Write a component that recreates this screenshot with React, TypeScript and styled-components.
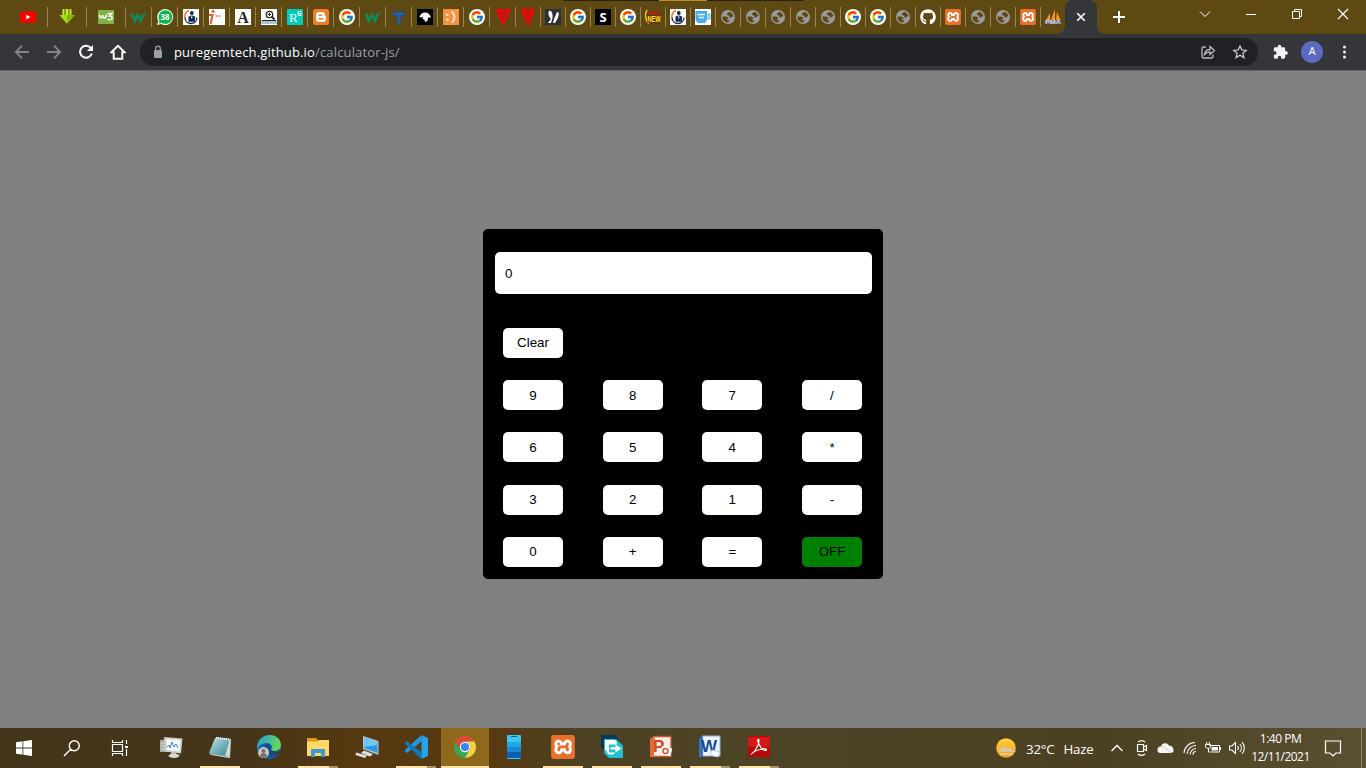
import React from "react";
import styled, { createGlobalStyle } from "styled-components";
import { FcGoogle } from "react-icons/fc";
import { FaGithub } from "react-icons/fa";
import { SiXampp } from "react-icons/si";

const Global = createGlobalStyle`
  * { box-sizing: border-box; }
  body { margin: 0; background: #808080; overflow: hidden; }
`;

const ui = `"Open Sans", "Noto Sans", sans-serif`;

const Screen = styled.div`
  width: 1366px;
  height: 768px;
  display: flex;
  flex-direction: column;
  font-family: ${ui};
`;

/* ---------- browser chrome ---------- */

const TabStrip = styled.header`
  position: relative;
  height: 34px;
  display: flex;
  background: #5f4913;
  padding-left: 9px;
`;

const TopEdge = styled.div`
  position: absolute;
  top: 0;
  left: 563px;
  width: 241px;
  height: 1px;
  background: linear-gradient(90deg, #2b2414 0 96px, #c08f2c 96px 144px, #2b2414 144px);
`;

const Tab = styled.div<{ $w: number; $pad: number; $last?: boolean }>`
  width: ${(p) => p.$w}px;
  height: 20px;
  margin-top: 7px;
  padding: 2px 0 0 ${(p) => p.$pad}px;
  border-right: 1px solid ${(p) => (p.$last ? "transparent" : "#9c8450")};
  svg { display: block; }
`;

const ActiveTab = styled.div`
  position: relative;
  width: 32px;
  height: 34px;
  margin-left: -1px;
  background: #35363a;
  border-radius: 8px 8px 0 0;
  display: flex;
  align-items: center;
  justify-content: center;
  &::before, &::after {
    content: "";
    position: absolute;
    bottom: 0;
    width: 8px;
    height: 8px;
  }
  &::before { left: -8px; background: radial-gradient(circle at 0 0, transparent 7.5px, #35363a 8px); }
  &::after { right: -8px; background: radial-gradient(circle at 100% 0, transparent 7.5px, #35363a 8px); }
`;

const NewTab = styled.div`
  margin: 10px 0 0 15px;
  height: 14px;
  svg { display: block; }
`;

const WindowButtons = styled.div`
  margin-left: auto;
  height: 28px;
  display: flex;
`;

const WindowButton = styled.div`
  width: 46px;
  display: flex;
  align-items: center;
  justify-content: center;
`;

const Toolbar = styled.div`
  height: 37px;
  display: flex;
  align-items: center;
  padding: 0 12px 1px 14px;
  background: #35363a;
  border-bottom: 1px solid #66656a;
  svg { display: block; flex: none; }
`;

const NavButtons = styled.div`
  display: flex;
  gap: 16px;
  margin-right: 14px;
`;

const AddressBar = styled.div`
  width: 1118px;
  height: 28px;
  border-radius: 14px;
  background: #202124;
  display: flex;
  align-items: center;
  padding: 0 10px;
`;

const Url = styled.div`
  margin: 0 auto 0 8px;
  font-size: 13px;
  line-height: 18px;
  letter-spacing: 0.15px;
  color: #9aa0a6;
  b { font-weight: 400; color: #ffffff; }
`;

const AddressActions = styled.div`
  display: flex;
  gap: 16px;
`;

const ToolbarActions = styled.div`
  display: flex;
  align-items: center;
  margin-left: 14px;
`;

const Avatar = styled.div`
  width: 22px;
  height: 22px;
  margin: 0 15px 0 12px;
  border-radius: 50%;
  background: #5c6bc0;
  color: #fff;
  font: 11px/22px Roboto, sans-serif;
  text-align: center;
`;

/* ---------- calculator ---------- */

const Page = styled.main`
  flex: 1;
  display: flex;
  justify-content: center;
  align-items: flex-start;
  padding-top: 158px;
  background: #808080;
`;

const Calculator = styled.section`
  width: 400px;
  height: 350px;
  border-radius: 5px;
  background: #000;
  padding: 23px 11px 0 12px;
`;

const Display = styled.input`
  display: block;
  width: 377px;
  height: 42px;
  border: 0;
  border-radius: 5px;
  padding: 0 10px 0;
  background: #fff;
  color: #000;
  font: 13.333px "Liberation Sans", Arial, sans-serif;
`;

const Keys = styled.div`
  display: grid;
  grid-template-columns: repeat(4, 60px);
  grid-auto-rows: 30px;
  column-gap: 39.67px;
  row-gap: 22.2px;
  margin: 34px 0 0 8px;
`;

const Key = styled.button<{ $power?: boolean; $alone?: boolean }>`
  width: 60px;
  height: 30px;
  padding: 0 0 0.15px;
  border: 0;
  border-radius: 5px;
  background: ${(p) => (p.$power ? "green" : "#fff")};
  color: #000;
  font: 13.333px "Liberation Sans", Arial, sans-serif;
  grid-column-end: ${(p) => (p.$alone ? "-1" : "auto")};
  grid-column-start: ${(p) => (p.$alone ? "1" : "auto")};
`;

/* ---------- taskbar ---------- */

const Taskbar = styled.footer`
  height: 40px;
  display: flex;
  background: linear-gradient(90deg, #43351a 0, #45351a 240px, #54380f 350px, #573a12 500px, #4d4223 580px, #4d4326 800px, #4b4022 1100px, #5a5031 1366px);
  color: #fff;
`;

const SystemCell = styled.div`
  width: 48px;
  display: flex;
  align-items: center;
  justify-content: center;
`;

const Apps = styled.div`
  display: flex;
  gap: 1px;
  margin-left: 3px;
`;

type Run = "none" | "single" | "many" | "active";

const AppCell = styled.div<{ $run: Run }>`
  width: 48px;
  height: 40px;
  display: flex;
  flex-direction: column;
  align-items: center;
  background: ${(p) => (p.$run === "active" ? "#8f681c" : "transparent")};
  svg { display: block; margin: 7px 0; }
  svg svg { margin: 0; }
  &::after {
    content: "";
    width: ${(p) => (p.$run === "active" ? 48 : 40)}px;
    height: 2px;
    background: ${(p) =>
      p.$run === "none"
        ? "transparent"
        : p.$run === "many"
        ? "linear-gradient(90deg, #ffe2a6 0 31px, #a8946c 31px)"
        : "#ffe2a6"};
  }
`;

const Tray = styled.div`
  margin-left: auto;
  display: flex;
  align-items: center;
  font-size: 13.5px;
  svg { display: block; flex: none; }
`;

const Weather = styled.div`
  display: flex;
  align-items: center;
  white-space: nowrap;
  width: 115px;
  span { margin-left: 9px; font-size: 13.3px; letter-spacing: -0.2px; position: relative; top: 1px; }
`;

const TrayIcons = styled.div`
  display: flex;
  align-items: center;
  gap: 8px;
`;

const Clock = styled.div`
  width: 71px;
  text-align: center;
  font-size: 12px;
  line-height: 18px;
  letter-spacing: -0.5px;
  white-space: nowrap;
`;

const Notice = styled.div`
  margin: 0 19px 0 8px;
`;

const DesktopEdge = styled.div`
  width: 5px;
  height: 40px;
  border-left: 1px solid #8f886f;
`;

/* ---------- favicons ---------- */

const I = ({ children, s = 16 }: { children: React.ReactNode; s?: number }) => (
  <svg width={s} height={s} viewBox={`0 0 ${s} ${s}`} overflow="visible">{children}</svg>
);

const Youtube = () => (
  <I><rect x="0" y="2.5" width="16" height="11.2" rx="2.8" fill="#f00" /><path d="M6.3 5.7v4.7l4.2-2.3z" fill="#fff" /></I>
);
const Download = () => (
  <I>
    <path d="M3.500 0h2v7h-2zM6.500 0h3v7h-3zM10.500 0h2v7h-2z" fill="#c4ef2b" />
    <path d="M.3 6h15.4L8 14.8z" fill="#a6dc18" /><path d="M8 6h7.7L8 14.8z" fill="#7fb90d" />
  </I>
);
const W3 = () => (
  <I>
    <rect y="1" width="16" height="14" fill="#7cb342" />
    <path d="M1.500 5.500c0 4.500 3 4 3.200.5.2 4.500 3.800 3.500 3.800-.8M9.500 4.500h4.500l-2.500 2.500c3.500-.2 3.500 3.900 0 3.800-1 0-1.700-.4-2-1" fill="none" stroke="#fff" strokeWidth="1.500" />
  </I>
);
const WMark = () => (
  <I>
    <path d="M1 4.500l2.800 7.200L6.800 6l3 5.700 2.700-6.500" fill="none" stroke="#108a5c" strokeWidth="2.700" />
    <path d="M13 3h2l-1 1.400c1.500 0 1.200 2-.9 1.600" fill="none" stroke="#138a58" strokeWidth=".8" />
  </I>
);
const Whatsapp = () => (
  <I>
    <path d="M0 16l1.200-4A8 8 0 1 1 4 14.900z" fill="#e8fff0" />
    <path d="M1.700 14.400l.8-3A6.800 6.800 0 1 1 4.600 13.700z" fill="#12b34b" />
    <text x="8" y="10.800" fontSize="8" fontWeight="700" fill="#fff" textAnchor="middle" fontFamily="Open Sans">38</text>
  </I>
);
const Crest = () => (
  <I>
    <rect width="16" height="16" fill="#fff" />
    <path d="M6 1.500A6.300 6.300 0 0 0 2 9" fill="none" stroke="#e87843" strokeWidth="1.600" />
    <path d="M2 8.500c0 8 12 8 12 0" fill="none" stroke="#172b50" strokeWidth="1.300" />
    <circle cx="8.800" cy="4" r="1.900" fill="#172b50" />
    <path d="M5.500 7.500l3.300-1.300 3.300 1.300v5.300H5.500z" fill="#172b50" /><path d="M8.500 6.500L8.200 9l.6.8.6-.8-.3-2.500z" fill="#fff" />
  </I>
);
const Info = () => (
  <I>
    <rect width="16" height="16" fill="#fff" />
    <circle cx="4" cy="2.200" r="1.500" fill="#e5602c" /><path d="M0 6h3.500L1.500 15" fill="none" stroke="#e5602c" strokeWidth="2.200" />
    <path d="M6.500 7h2M9.500 7h2" stroke="#d77963" strokeWidth="1.400" />
  </I>
);
const LetterA = () => (
  <I>
    <rect width="16" height="16" fill="#fff" />
    <text x="8" y="13.500" fontSize="16" fontWeight="700" textAnchor="middle" fontFamily="Liberation Serif" fill="#262626">A</text>
  </I>
);
const SearchShot = () => (
  <I>
    <rect width="16" height="16" fill="#fff" /><path d="M0 12h16v3H0z" fill="#a3c7d9" /><path d="M1 11.500h14" stroke="#222" />
    <circle cx="8.500" cy="5.500" r="3.200" fill="#fff" stroke="#222" strokeWidth="1.300" /><path d="M10.500 7.500l3 3" stroke="#222" strokeWidth="1.800" />
    <path d="M7 5.500h3M8.500 4v3" stroke="#222" />
  </I>
);
const RG = () => (
  <I>
    <rect width="16" height="16" rx="1" fill="#00ccbb" />
    <text x="2" y="13" fontSize="13" fill="#fff" fontFamily="Liberation Serif">R</text>
    <text x="10" y="6.500" fontSize="6.500" fontWeight="700" fill="#fff" fontFamily="Open Sans">G</text>
  </I>
);
const Blogger = () => (
  <I>
    <rect width="16" height="16" rx="2.500" fill="#f57d1f" />
    <path d="M6.200 3H9c2 0 3 1.300 3 3.200 0 .8 1 .5 1 1.500v2A3.300 3.300 0 0 1 9.700 13H6.200A3.200 3.200 0 0 1 3 9.800V6.200A3.200 3.200 0 0 1 6.200 3z" fill="#fff" />
    <path d="M6.200 6.200h2.300M6.200 9.800h3.600" stroke="#f57d1f" strokeWidth="1.400" strokeLinecap="round" />
  </I>
);
const LetterT = () => (
  <I>
    <path d="M1 2.500h12l2 2-1 2h-3.600V15H6V6.500H2z" fill="#184a7e" opacity=".75" />
    <path d="M2 3.500h11v2.500H9.500v8.500h-3V6H2z" fill="#1d63b6" />
  </I>
);
const Bird = () => (
  <I><rect width="16" height="16" fill="#000" /><path d="M2.500 8.500c.5-3.500 3-5 5.500-5 3.500 0 5 2 6 5h-3l-.5 3.500L8 13l-.5-2.500-2-.5.500-2z" fill="#fff" /></I>
);
const Smile = () => (
  <I>
    <rect width="16" height="16" fill="#f59340" />
    <path d="M3 4.500h2.500V7H3zM3 9.500h2.500V12H3z" fill="#ffe1bd" /><path d="M8.500 2.500c4 3 4 8 0 11" fill="none" stroke="#ffe1bd" strokeWidth="2" />
  </I>
);
const GoogleDisc = () => (
  <I><circle cx="8" cy="8" r="8" fill="#fff" /><FcGoogle x={1} y={1} size={14} /></I>
);
const RedTriangle = () => (
  <I><path d="M0 0h16L8.800 16H7.200z" fill="#e80b0b" /><path d="M5.500 4h5L8 10.500z" fill="none" stroke="#9c1a0d" strokeWidth="1" /></I>
);
const Scribble = () => (
  <I>
    <rect width="16" height="16" fill="#2c3038" />
    <path d="M4 2c3-1 4 4 3.500 7L6 14H3l3-4c-2-2-3.500-6-2-8zM9 10l3-7 2 1-1 5-3 5H8z" fill="#fff" />
  </I>
);
const LetterS = () => (
  <I><rect width="16" height="16" fill="#000" /><text x="8" y="12.700" fontSize="13" fontWeight="700" textAnchor="middle" fontFamily="Open Sans" fill="#fff">S</text></I>
);
const New = () => (
  <I>
    <path d="M3 1l2 2 3-1 2 1 4-1v3H4z" fill="#b41b15" />
    <path d="M2 1C-.5 5 0 11 4 14.500" fill="none" stroke="#e4cd1a" strokeWidth="1.500" />
    <text x="2.500" y="13" fontSize="8.500" fontWeight="700" fill="#ffef1a" stroke="#7d1b12" strokeWidth="1.600" paintOrder="stroke" fontFamily="Liberation Sans" textLength="13" lengthAdjust="spacingAndGlyphs">NEW</text>
  </I>
);
const Cup = () => (
  <I>
    <rect width="16" height="16" fill="#fff" />
    <path d="M.500 2h11.500v9l-2 3h-7l-2.500-3z" fill="#43aee8" /><path d="M2.500 5.500h7.500M4 8.500h5" stroke="#fff" strokeWidth="1.300" />
    <path d="M13 5h2v5h-2z" fill="none" stroke="#43aee8" />
  </I>
);
const Globe = () => (
  <I>
    <circle cx="8" cy="8" r="7" fill="#9a9b9f" />
    <path d="M2.500 7.500h4l1.800 1.400v1.300H7v1h2.200v1.200l-1.700 1.200C4.500 13.300 2.200 11 2.500 7.500zM7 5.800V4.500l2.400-1.800c2.200.6 3.800 2.400 4 4.800h-1.500l-.8.900H9.300V6.900z" fill="#5f4913" />
  </I>
);
const Github = () => <FaGithub size={16} color="#fff" />;
const XamppGlyph = ({ s = 16 }: { s?: number }) => (
  <I s={s}>
    <rect x="1" y="1" width={s - 2} height={s - 2} fill="#fff" />
    <SiXampp size={s} color="#e8702a" />
  </I>
);
const Sails = () => (
  <I>
    <path d="M1 11L5 4v7zM6 11l4-11v11zM11 11l1-8 3.500 8z" fill="#f39a25" />
    <path d="M0 11h16l-1.500 4h-13z" fill="#5d6687" />
    <text x="0" y="15" fontSize="5.500" fontWeight="700" fill="#d6d9e5" fontFamily="Liberation Sans" textLength="16" lengthAdjust="spacingAndGlyphs">PMA</text>
  </I>
);

const TABS: React.FC[] = [
  Youtube, Download, W3, WMark, Whatsapp, Crest, Info, LetterA, SearchShot, RG, Blogger, GoogleDisc, WMark,
  LetterT, Bird, Smile, GoogleDisc, RedTriangle, RedTriangle, Scribble, GoogleDisc, LetterS, GoogleDisc, New,
  Crest, Cup, Globe, Globe, Globe, Globe, Globe, GoogleDisc, GoogleDisc, Globe, Github, XamppGlyph, Globe,
  Globe, XamppGlyph, Sails,
];

const tabWidth = (i: number) => (i < 3 ? 39 : i < 18 ? 26 : 25);
const tabPad = (i: number) => (i < 3 ? 11 : i < 18 ? 5 : 4);

/* ---------- taskbar icons ---------- */

const Monitor = () => (
  <I s={24}>
    <path d="M1 5l9-1v13H1z" fill="#aaa9a5" /><path d="M2 8h5M2 11h5M2 14h5" stroke="#e2e1dd" />
    <path d="M5 2l18.500 1.500L22 18.500 6 16.500z" fill="#cfcfca" /><path d="M7.500 4l14 1-1 11.500-12.500-1.500z" fill="#f5fbff" />
    <path d="M8 12l2-2 1 3 2-6 2 5 2-3 2 4" fill="none" stroke="#3a8ac9" /><path d="M12 17h5v3h-5z" fill="#bdbdb8" /><ellipse cx="15" cy="20.800" rx="5.500" ry="2.200" fill="#d8d8d2" />
  </I>
);
const Notepad = () => (
  <I s={24}>
    <defs><linearGradient id="note" x1="0" y1="0" x2="1" y2="1"><stop stopColor="#c5e3e6" /><stop offset="1" stopColor="#2b8798" /></linearGradient></defs>
    <path d="M8 2l15 2-1 19-8-2z" fill="#d9dad2" /><path d="M7 3l15 1-5 17-16-3z" fill="url(#note)" />
    <path d="M1 18l16 3 5-1-1 3-18-3z" fill="#b9c2bb" /><path d="M8 3l14 1.500" stroke="#ededed" strokeWidth="2" strokeDasharray="1 1" />
  </I>
);
const Edge = () => (
  <I s={24}>
    <defs><linearGradient id="edge" x1="0" y1="0" x2="1" y2=".3"><stop stopColor="#2499db" /><stop offset="1" stopColor="#67d65d" /></linearGradient></defs>
    <circle cx="12" cy="12" r="12" fill="#1261ad" />
    <path d="M0 12C1-3 23-4 24 10c0 6-7 7-10 5 3-3 0-7-4-7-5 0-9 3-10 7z" fill="url(#edge)" />
    <path d="M10 8.500c-5 3-3 13.500 5 13.500 3 0 6-2 7-4-6 1-9 0-8.500-3.500C14.500 11 13 9 10 8.500z" fill="#104c92" />
    <path d="M24 14.500c-2 2.500-7 3-10 .8 0 3 4 4 8.500 2.700z" fill="#46392a" />
    <circle cx="6.500" cy="17.500" r="5.500" fill="#c8c6c2" /><circle cx="6.500" cy="16" r="2" fill="#77716b" /><path d="M3 21c.5-4 6.500-4 7 0-2 2.500-5 2.500-7 0z" fill="#77716b" />
  </I>
);
const Explorer = () => (
  <I s={24}>
    <path d="M1 3h9l2 2h11v16H1z" fill="#df9819" /><path d="M1 6.500h11l1.500-1.500H23v16H1z" fill="#ffd968" />
    <path d="M5 22v-8h14v8h-4v-4H9v4z" fill="#4199d1" />
  </I>
);
const Remote = () => (
  <I s={24}>
    <path d="M8 1l15.500 5v14L8 14z" fill="#b5c7d4" /><path d="M9 2.500l13.500 4.500v11L9 13z" fill="#2b9ae3" /><path d="M9 2.500l13.500 4.500v3L9 12z" fill="#71c4f4" />
    <path d="M9 15.500l9 3.500-3 2.500-9-3.500zM1 17.500l11 3-2 2.500-9.500-3z" fill="#dce0df" />
  </I>
);
const VSCode = () => (
  <I s={24}>
    <path d="M17.500 0L24 3v18l-6.500 3z" fill="#24a4ee" />
    <path d="M17.500 0v6.500L3 18l-2.500-2.200L3 13z" fill="#2497dd" /><path d="M17.500 24v-6.500L3 6 .5 8.200l14 13z" fill="#087bc0" />
  </I>
);
const Chrome = () => (
  <I s={24}>
    <circle cx="12" cy="12" r="11" fill="#35a853" />
    <path d="M2.500 6.500A11 11 0 0 1 21.500 6.500H12a5.500 5.500 0 0 0-4.700 8.250z" fill="#e44435" />
    <path d="M21.500 6.500A11 11 0 0 1 12 23l4.700-8.250A5.500 5.500 0 0 0 12 6.500z" fill="#fbd13c" />
    <circle cx="12" cy="12" r="5.200" fill="#fff" /><circle cx="12" cy="12" r="4.100" fill="#3e82ef" />
  </I>
);
const Phone = () => (
  <I s={24}>
    <rect x="5" width="14" height="24" rx="1" fill="#38c9f3" /><path d="M5 7h14v5H5z" fill="#20a8e5" /><path d="M5 12h14v5H5z" fill="#188bd0" /><path d="M5 17h14v6H5z" fill="#0860b4" />
    <path d="M9 1.500h6" stroke="#14546c" />
  </I>
);
const Share = () => (
  <I s={24}>
    <path d="M1 0h14l4 5v12H6l-5-5z" fill="#0b3555" />
    <path d="M4 4h12.500L23 11v12H9l-5-5z" fill="#22bfd4" />
    <path d="M5 5h10l2 2.500v2H8v8l-3-3z" fill="#fff" />
    <path d="M7 9.500h2v8h6l-1.500 2H9l-2-2z" fill="#fff" />
    <path d="M10.500 12.300h5V9.500l6 4-6 4v-2.900h-5z" fill="#fff" />
  </I>
);
const PowerPoint = () => (
  <I s={24}>
    <path d="M5 1.500h17v20H4z" fill="#f9ede6" stroke="#cb5529" strokeWidth="1.300" /><path d="M1 4l4-3v21H1z" fill="#e6693a" />
    <text x="4" y="16.500" fontSize="17" fontWeight="700" fill="#cf4c1d" fontFamily="Liberation Sans">P</text>
    <rect x="12" y="12" width="10.500" height="8" fill="#fff" transform="rotate(15 17 16)" /><circle cx="16.500" cy="16" r="2.500" fill="none" stroke="#d7542b" strokeWidth="1.500" />
  </I>
);
const Word = () => (
  <I s={24}>
    <path d="M4 1h18v20H4z" fill="#eff5fd" stroke="#8fb1dc" /><path d="M1 4l4-3v21H1z" fill="#3976c2" />
    <text x="3" y="16.500" fontSize="17" fontWeight="700" fill="#174a94" fontFamily="Liberation Sans">W</text>
    <path d="M14 15l8 2-2 5-8-2z" fill="#fff" stroke="#b8cbe6" />
  </I>
);
const Acrobat = () => (
  <I s={24}>
    <rect x="1" y="1" width="22" height="21" rx="1.500" fill="#b80808" /><path d="M1 2h22v10H1z" fill="#d31815" />
    <path d="M5 18.500c3-1.500 7-9 7-13 0-2-2-1-1 1 1 4 4 9 8 9 2-1-1-3-6-1-4 1-7 2.500-8 4z" fill="none" stroke="#fff" strokeWidth="1.200" />
  </I>
);
const Xampp24 = () => <XamppGlyph s={24} />;

const APPS: [React.FC, Run][] = [
  [Monitor, "none"], [Notepad, "single"], [Edge, "none"], [Explorer, "many"], [Remote, "none"],
  [VSCode, "many"], [Chrome, "active"], [Phone, "none"], [Xampp24, "single"], [Share, "single"],
  [PowerPoint, "single"], [Word, "many"], [Acrobat, "many"],
];

const KEYS = ["Clear", "9", "8", "7", "/", "6", "5", "4", "*", "3", "2", "1", "-", "0", "+", "=", "OFF"];

const Line = ({ d, w = 16, h = 16, c = "#fff", sw = 1 }: { d: string; w?: number; h?: number; c?: string; sw?: number }) => (
  <svg width={w} height={h} viewBox={`0 0 ${w} ${h}`} fill="none" stroke={c} strokeWidth={sw}><path d={d} /></svg>
);

export default function App() {
  return (
    <Screen>
      <Global />
      <TabStrip>
        <TopEdge />
        {TABS.map((Icon, i) => (
          <Tab key={i} $w={tabWidth(i)} $pad={tabPad(i)} $last={i === TABS.length - 1}><Icon /></Tab>
        ))}
        <ActiveTab><Line w={10} h={10} sw={1.6} d="M1.200 1.200l7.600 7.600M8.800 1.200L1.200 8.800" /></ActiveTab>
        <NewTab><Line w={14} h={14} sw={2} d="M7 1v12M1 7h12" /></NewTab>
        <WindowButtons>
          <WindowButton><Line w={12} h={12} d="M1 3.500l5 5 5-5" /></WindowButton>
          <WindowButton><Line w={10} h={10} d="M0 5.500h10" /></WindowButton>
          <WindowButton><Line w={10} h={10} d="M.5 2.500h7v7h-7zM2.500 2.500v-2h7v7h-2" /></WindowButton>
          <WindowButton><Line w={12} h={12} sw={1.2} d="M1 1l10 10M11 1L1 11" /></WindowButton>
        </WindowButtons>
      </TabStrip>

      <Toolbar>
        <NavButtons>
          <Line c="#85868a" sw={1.8} d="M15 8H2M8 1.700L1.800 8 8 14.300" />
          <Line c="#85868a" sw={1.8} d="M1 8h13M8 1.700L14.200 8 8 14.300" />
          <svg width="16" height="16" viewBox="0 0 16 16"><path d="M12.800 4A6 6 0 1 0 13.800 9.500" fill="none" stroke="#fff" strokeWidth="2" /><path d="M15 1v6H9z" fill="#fff" /></svg>
          <Line sw={1.900} d="M8 1.800L1.300 8.300H3.700v6.400h8.600V8.300h2.400z" />
        </NavButtons>
        <AddressBar>
          <svg width="16" height="16" viewBox="0 0 16 16"><rect x="4" y="6" width="8" height="8" rx="1" fill="#9aa0a6" /><path d="M5.700 6V4.500a2.300 2.300 0 0 1 4.600 0V6" fill="none" stroke="#9aa0a6" strokeWidth="1.300" /></svg>
          <Url><b>puregemtech.github.io</b>/calculator-js/</Url>
          <AddressActions>
            <Line c="#b9bbbf" sw={1.300} d="M6 3H3.500A1.500 1.500 0 0 0 2 4.500v8A1.500 1.500 0 0 0 3.500 14h8a1.500 1.500 0 0 0 1.500-1.500V10.500M4.500 10.500C5 7 7 5.500 10 5.500V2.500l4.500 4-4.500 4V8C7.500 8 6 8.700 4.500 10.500z" />
            <Line c="#c8cace" sw={1.300} d="M8 2l1.800 4 4.400.4-3.300 2.900 1 4.300L8 11.300l-3.900 2.300 1-4.300L1.800 6.400 6.200 6z" />
          </AddressActions>
        </AddressBar>
        <ToolbarActions>
          <svg width="17" height="16" viewBox="0 0 24 24"><path fill="#f1f3f4" d="M20.500 11H19V7a2 2 0 0 0-2-2h-4V3.500a2.500 2.500 0 0 0-5 0V5H4a2 2 0 0 0-2 2v3.800h1.500a2.700 2.700 0 0 1 0 5.400H2V20a2 2 0 0 0 2 2h3.800v-1.500a2.700 2.700 0 0 1 5.400 0V22H17a2 2 0 0 0 2-2v-4h1.500a2.500 2.500 0 0 0 0-5z" /></svg>
          <Avatar>A</Avatar>
          <svg width="16" height="16" viewBox="0 0 16 16" fill="#f1f3f4"><circle cx="6.500" cy="3" r="1.500" /><circle cx="6.500" cy="8" r="1.500" /><circle cx="6.500" cy="13" r="1.500" /></svg>
        </ToolbarActions>
      </Toolbar>

      <Page>
        <Calculator>
          <Display readOnly value="0" />
          <Keys>
            {KEYS.map((k) => <Key key={k} $alone={k === "Clear"} $power={k === "OFF"}>{k}</Key>)}
          </Keys>
        </Calculator>
      </Page>

      <Taskbar>
        <SystemCell>
          <svg width="16" height="16" viewBox="0 0 16 16" fill="#fff"><path d="M0 2.200L6.500 1.300v6.200H0zM7.300 1.200L16 0v7.500H7.300zM0 8.400h6.500v6.200L0 13.700zM7.300 8.400H16V16l-8.700-1.200z" /></svg>
        </SystemCell>
        <SystemCell><Line w={18} h={18} sw={1.400} d="M16.300 6.700a5 5 0 1 1-10 0 5 5 0 1 1 10 0zM7.700 10.300L1 17" /></SystemCell>
        <SystemCell><Line w={18} h={18} sw={1.200} d="M1.500 1v2.500h10V1M1.500 17v-2.500h10V17M1.500 5.500h10v7h-10zM15.500 1v4M15.500 10v7M14 7.500h3M14 8.500h3" /></SystemCell>
        <Apps>
          {APPS.map(([Icon, run], i) => <AppCell key={i} $run={run}><Icon /></AppCell>)}
        </Apps>
        <Tray>
          <Weather>
            <svg width="22" height="22" viewBox="0 0 22 22">
              <defs><linearGradient id="sun" x1="0" y1="0" x2="0" y2="1"><stop stopColor="#ffd23e" /><stop offset="1" stopColor="#f39a20" /></linearGradient></defs>
              <circle cx="11" cy="11" r="9.800" fill="url(#sun)" />
              <path d="M3 13c3-1 3-3 6-3 3-.5 3 2 7 2 2 0 4 2 5 3H9c-3 0-4-1-6-2z" fill="#d9c6a8" /><path d="M5 17h13" stroke="#e8c58d" strokeWidth="2" />
            </svg>
            <span>32°C</span><span>Haze</span>
          </Weather>
          <TrayIcons>
            <Line w={17} h={14} sw={1.300} d="M1.500 10L7 4.500l5.500 5.500" />
            <Line w={14} h={18} sw={1.200} d="M2.500 5.500h6v7h-6zM8.500 8l3-1.500v5L8.500 10M3 3c2-1.700 5-1.700 7 0M3 15c2 1.700 5 1.700 7 0" />
            <svg width="18" height="12" viewBox="0 0 18 12"><path d="M3.500 11a3.200 3.200 0 0 1 .3-6.400A4.500 4.500 0 0 1 12 3.500c3 0 5 3 4.500 5.500-.3 1.200-1.300 2-2.500 2z" fill="#f5f5f3" /><path d="M1 7c1-3 5-3 7-1l6 5" fill="none" stroke="#c9c9c4" /></svg>
            <Line w={14} h={14} sw={1.100} d="M1 12A11 11 0 0 1 12 1.500M4 13A9 9 0 0 1 13 4.500M7 13.500A7 7 0 0 1 13 7.500M10 13.500a3 3 0 0 1 3-3" />
            <svg width="16" height="14" viewBox="0 0 16 14"><path d="M4.500 4.500h10v6.500h-8.500M15.500 6v3M.5 3.500h5V6c-1 2-4 2-5 0zM1.700 1v2M4.300 1v2M3.500 7.500V11h2" fill="none" stroke="#fff" /><path d="M6.500 6h6.500v3.500H6.500z" fill="#fff" /></svg>
            <Line w={16} h={14} sw={1.100} d="M.5 5h2.500l3.500-3.500v11L3 9H.5zM8.500 5a3 3 0 0 1 0 4M10.800 3a6 6 0 0 1 0 8M13 1.200a8.500 8.500 0 0 1 0 11.600" />
          </TrayIcons>
          <Clock>1:40 PM<br />12/11/2021</Clock>
          <Notice><Line w={18} h={18} sw={1.200} d="M1.500 2h15v12H12l-3 3-3-3H1.500z" /></Notice>
          <DesktopEdge />
        </Tray>
      </Taskbar>
    </Screen>
  );
}
